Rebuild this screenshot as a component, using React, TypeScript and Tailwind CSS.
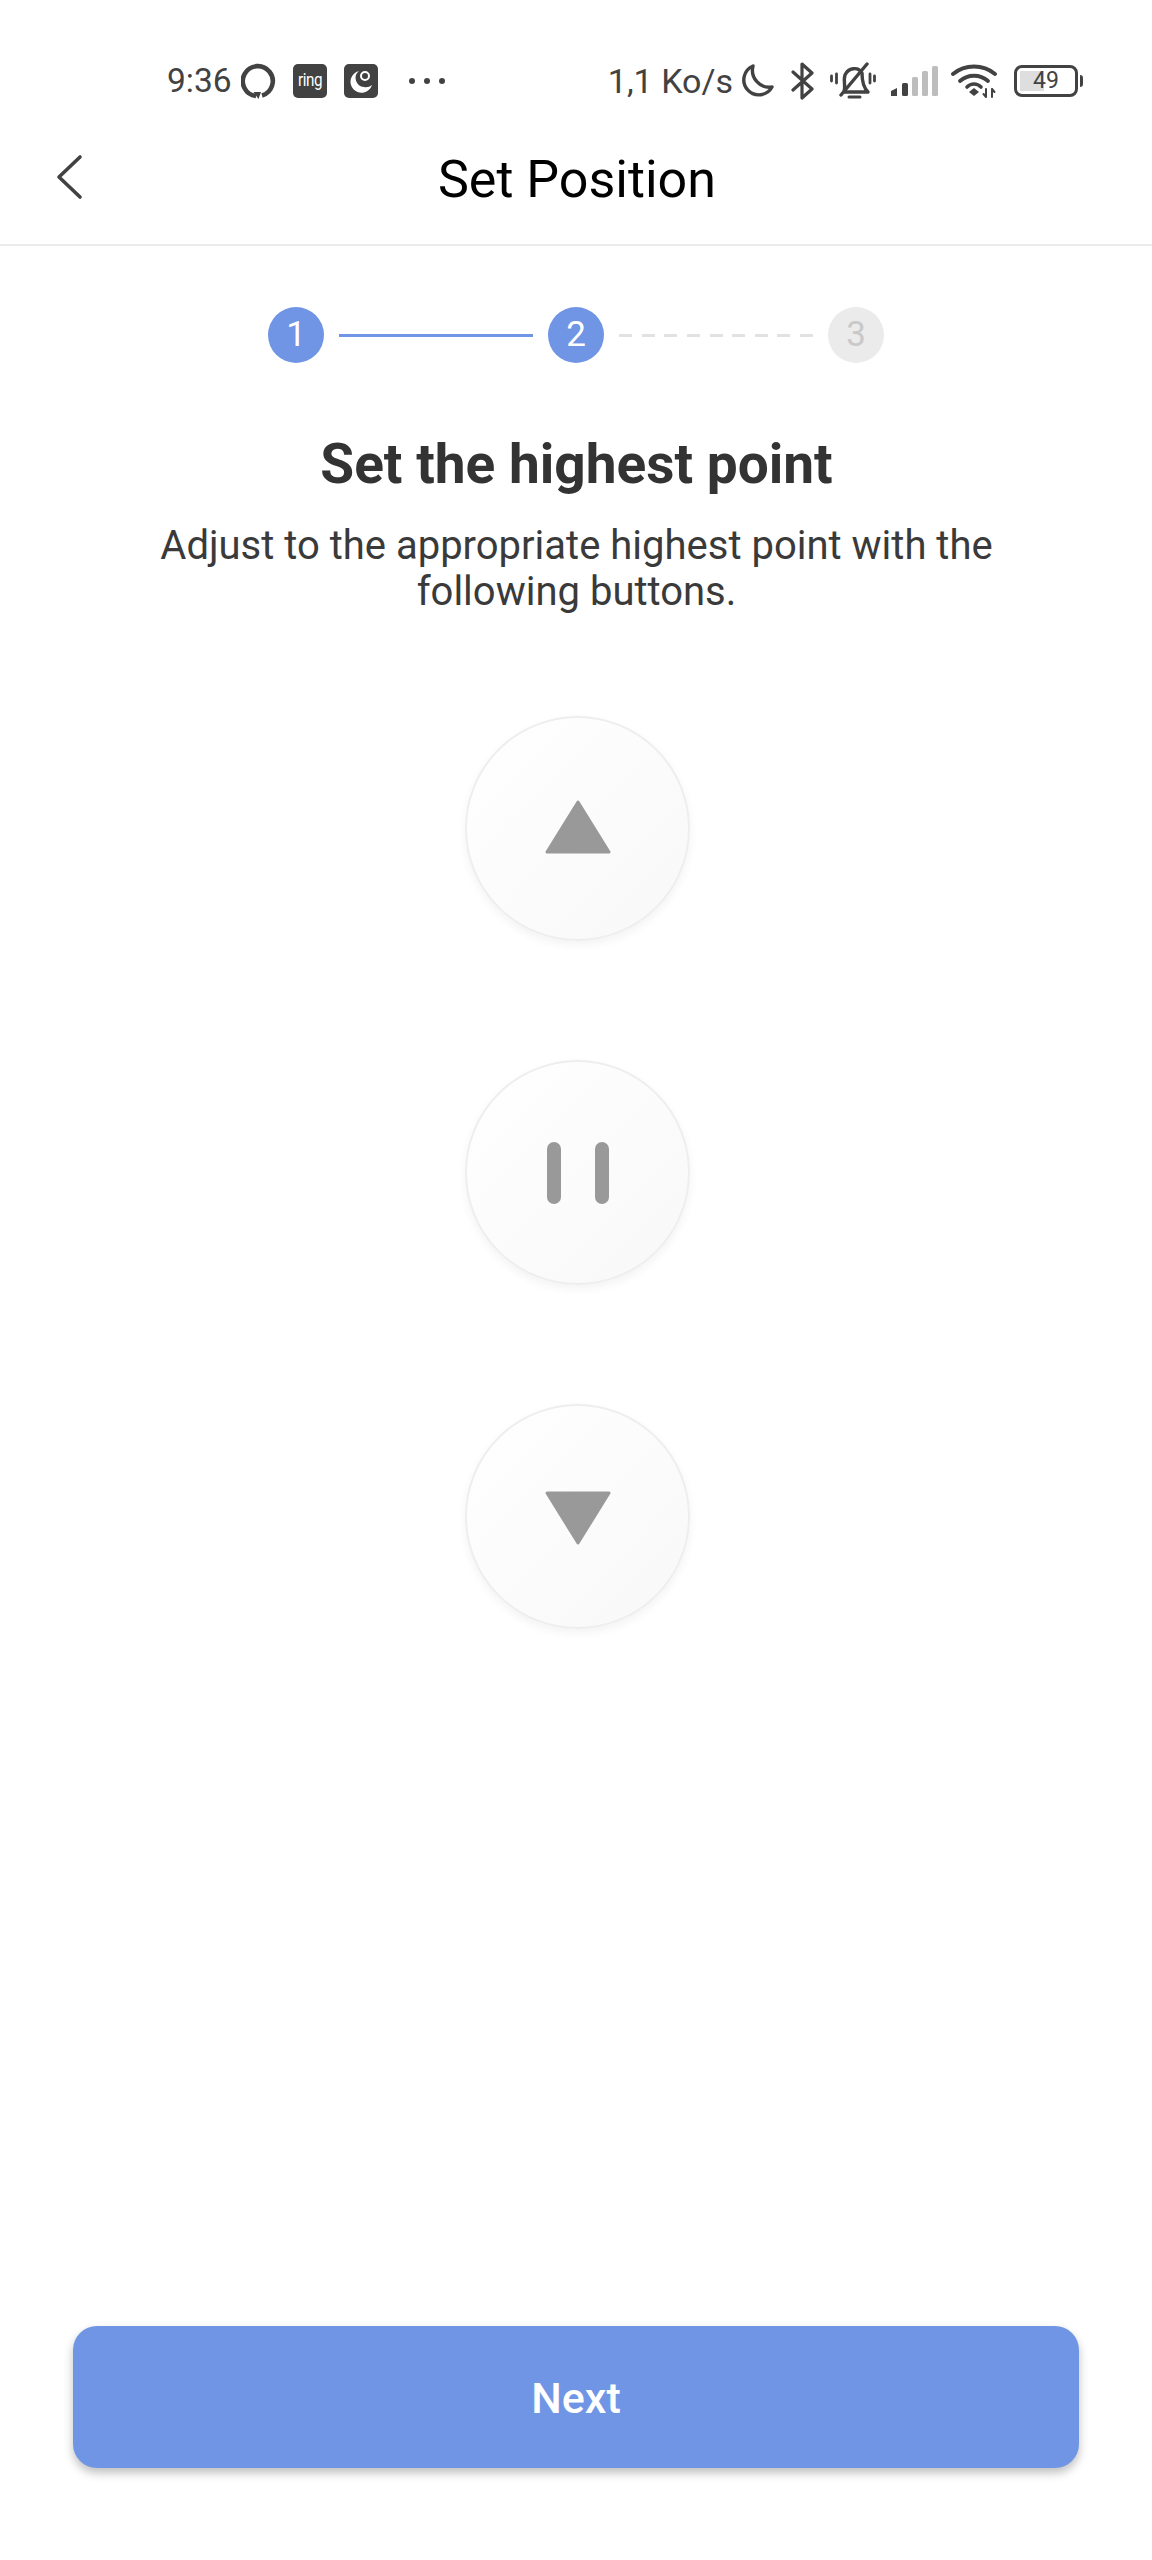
const INK = "#424242";

function AlexaIcon() {
  return (
    <svg width="36" height="36" viewBox="0 0 36 36" fill="none">
      <path d="M15 33 A15 15 0 1 1 21 32.500" stroke={INK} strokeWidth="4.600" />
      <path d="M12.500 29 L17.500 36 L20 29 Z" fill={INK} />
    </svg>
  );
}

function RingIcon() {
  return (
    <div className="flex h-[34px] w-[34px] items-center justify-center rounded-[5px] bg-[#424242] pb-[3px] text-[19px] leading-none tracking-[-0.5px] text-white">
      <span className="scale-x-[0.8]">ring</span>
    </div>
  );
}

function NightIcon() {
  return (
    <svg width="34" height="34" viewBox="0 0 34 34">
      <rect width="34" height="34" rx="5" fill={INK} />
      <path d="M15 7 A11 11 0 1 0 28 21 A10 10 0 0 1 20 23 A9 9 0 0 1 15 7 Z" fill="#fff" />
      <circle cx="21" cy="12" r="4" fill="none" stroke="#fff" strokeWidth="2" />
    </svg>
  );
}

function MoonIcon() {
  return (
    <svg width="36" height="36" viewBox="0 0 36 36" fill="none">
      <path d="M14 3 A15 15 0 1 0 33 24 A17 17 0 0 1 14 3 Z" stroke={INK} strokeWidth="3.400" strokeLinejoin="round" />
    </svg>
  );
}

function BluetoothIcon() {
  return (
    <svg width="24" height="38" viewBox="0 0 24 38" fill="none">
      <path d="M2 10 L21 27 L11 36 V2 L21 11 L2 28" stroke={INK} strokeWidth="3.200" strokeLinejoin="round" strokeLinecap="round" />
    </svg>
  );
}

function MutedBellIcon() {
  return (
    <svg width="46" height="38" viewBox="0 0 46 38" fill="none" stroke={INK} strokeLinecap="round">
      <path d="M14 30 C16 25 13 19 15 13 C18 6 28 4 32 11 C32 19 33 25 38 30 L14 30" strokeWidth="3.400" strokeLinejoin="round" />
      <path d="M19 35 H30" strokeWidth="3" />
      <path d="M11 33 L37 2" strokeWidth="3.400" />
      <path d="M6.500 12 V21 M1.500 14 V19 M40 12 V21 M44.500 14 V19" strokeWidth="2.800" />
    </svg>
  );
}

function SignalIcon() {
  return (
    <svg width="48" height="32" viewBox="0 0 48 32">
      <path d="M1 31 V26 L7 23 V31 Z" fill={INK} />
      <rect x="12" y="18" width="6" height="13" rx="1.500" fill={INK} />
      <rect x="22" y="12" width="6" height="19" rx="1.500" fill="#bdbdbd" />
      <rect x="32" y="6" width="6" height="25" rx="1.500" fill="#bdbdbd" />
      <rect x="42" y="1" width="6" height="30" rx="1.500" fill="#bdbdbd" />
    </svg>
  );
}

function WifiIcon() {
  return (
    <svg width="48" height="36" viewBox="0 0 48 36" fill="none" stroke={INK} strokeLinecap="round">
      <path d="M2 11 C14 1 32 1 44 11" strokeWidth="3.800" />
      <path d="M9 18 C17 11 29 11 37 18" strokeWidth="3.800" />
      <path d="M16 24 C20 20 26 20 30 24" strokeWidth="3.600" />
      <path d="M18 29 L23 25 L28 29 L23 33 Z" fill={INK} stroke="none" />
      <path d="M35 26 V34 M32.500 31 L35 34 M41 34 V26 M41 26 L43.500 29" strokeWidth="2" />
    </svg>
  );
}

function BatteryIcon() {
  return (
    <div className="flex items-center gap-[2px]">
      <div className="relative flex h-[32px] w-[64px] items-center justify-center overflow-hidden rounded-[8px] border-[3px] border-[#424242]">
        <div className="absolute inset-y-[3px] left-[3px] w-[24px] bg-[#dedede]" />
        <span className="relative text-[23px] leading-none text-[#424242]">49</span>
      </div>
      <div className="h-[12px] w-[3px] rounded-r-full bg-[#424242]" />
    </div>
  );
}

function StatusBar() {
  return (
    <div className="flex h-[130px] items-center justify-between pl-[167px] pr-[69px] pt-[31px] text-[#424242]">
      <div className="flex items-center">
        <span className="w-[74px] text-[33.500px] leading-none">9:36</span>
        <AlexaIcon />
        <div className="ml-[16px]"><RingIcon /></div>
        <div className="ml-[17px]"><NightIcon /></div>
        <div className="ml-[31px] flex gap-[9px]">
          <span className="h-[6px] w-[6px] rounded-full bg-[#424242]" />
          <span className="h-[6px] w-[6px] rounded-full bg-[#424242]" />
          <span className="h-[6px] w-[6px] rounded-full bg-[#424242]" />
        </div>
      </div>
      <div className="flex items-center">
        <span className="mr-[6px] text-[34px] leading-none">1,1 Ko/s</span>
        <MoonIcon />
        <div className="ml-[16px]"><BluetoothIcon /></div>
        <div className="ml-[15px]"><MutedBellIcon /></div>
        <div className="ml-[14px]"><SignalIcon /></div>
        <div className="ml-[13px]"><WifiIcon /></div>
        <div className="ml-[15px]"><BatteryIcon /></div>
      </div>
    </div>
  );
}

function NavBar() {
  return (
    <div className="relative flex h-[116px] items-center justify-center border-b-2 border-[#ebebeb] pb-[15px]">
      <svg className="absolute left-[54px] top-[24px]" width="30" height="46" viewBox="0 0 30 46" fill="none">
        <path d="M26 3 L5 23 L26 43" stroke="#424242" strokeWidth="3.600" strokeLinecap="round" strokeLinejoin="round" />
      </svg>
      <h1 className="pl-[2px] text-[52px] leading-none text-black">Set Position</h1>
    </div>
  );
}

function StepDot({ n, done }: { n: number; done: boolean }) {
  return (
    <div
      className={
        done
          ? "flex h-[56px] w-[56px] items-center justify-center rounded-full bg-[#7095e5] text-[35px] text-white"
          : "flex h-[56px] w-[56px] items-center justify-center rounded-full bg-[#ebebeb] text-[35px] text-[#c9c9c9]"
      }
    >
      {n}
    </div>
  );
}

const dashes = [0, 1, 2, 3, 4, 5, 6, 7, 8];

function Stepper() {
  return (
    <div className="mt-[61px] flex items-center justify-center">
      <StepDot n={1} done />
      <div className="mx-[15px] h-[3px] w-[194px] bg-[#7095e5]" />
      <StepDot n={2} done />
      <div className="mx-[15px] flex w-[194px] justify-between">
        {dashes.map((d) => (
          <div key={d} className="h-[3px] w-[13px] bg-[#e2e2e2]" />
        ))}
      </div>
      <StepDot n={3} done={false} />
    </div>
  );
}

function RoundButton({ children }: { children: React.ReactNode }) {
  return (
    <button className="flex h-[225px] w-[225px] items-center justify-center rounded-full border-2 border-[#eeeeee] bg-gradient-to-br from-white to-[#f8f8f8] shadow-[0_4px_10px_rgba(0,0,0,0.05)]">
      {children}
    </button>
  );
}

export default function App() {
  return (
    <div className="flex h-[2560px] w-[1152px] flex-col bg-white font-['Roboto',sans-serif]">
      <StatusBar />
      <NavBar />
      <Stepper />
      <h2 className="mt-[71px] pl-[1px] text-center text-[55px] font-bold leading-[60px] text-[#333333]">Set the highest point</h2>
      <p className="mt-[29px] pl-[1px] text-center text-[40px] leading-[46px] text-[#3a3a3a]">
        Adjust to the appropriate highest point with the
        <br />
        following buttons.
      </p>
      <div className="mt-[101px] flex flex-col items-center gap-[119px] pl-[3px]">
        <RoundButton>
          <svg className="mb-[4px]" width="66" height="54" viewBox="0 0 66 54">
            <path d="M33 2 L64 52 H2 Z" fill="#999999" stroke="#999999" strokeWidth="3" strokeLinejoin="round" />
          </svg>
        </RoundButton>
        <RoundButton>
          <div className="flex gap-[34px]">
            <div className="h-[62px] w-[14px] rounded-full bg-[#999999]" />
            <div className="h-[62px] w-[14px] rounded-full bg-[#999999]" />
          </div>
        </RoundButton>
        <RoundButton>
          <svg className="mt-[3px]" width="66" height="54" viewBox="0 0 66 54">
            <path d="M33 52 L64 2 H2 Z" fill="#999999" stroke="#999999" strokeWidth="3" strokeLinejoin="round" />
          </svg>
        </RoundButton>
      </div>
      <div className="mt-auto px-[73px] pb-[92px]">
        <button className="flex h-[142px] w-full items-center justify-center rounded-[24px] bg-[#7095e5] pt-[3px] text-[43px] font-medium text-white shadow-[0_5px_10px_rgba(0,0,0,0.25)]">
          Next
        </button>
      </div>
    </div>
  );
}
